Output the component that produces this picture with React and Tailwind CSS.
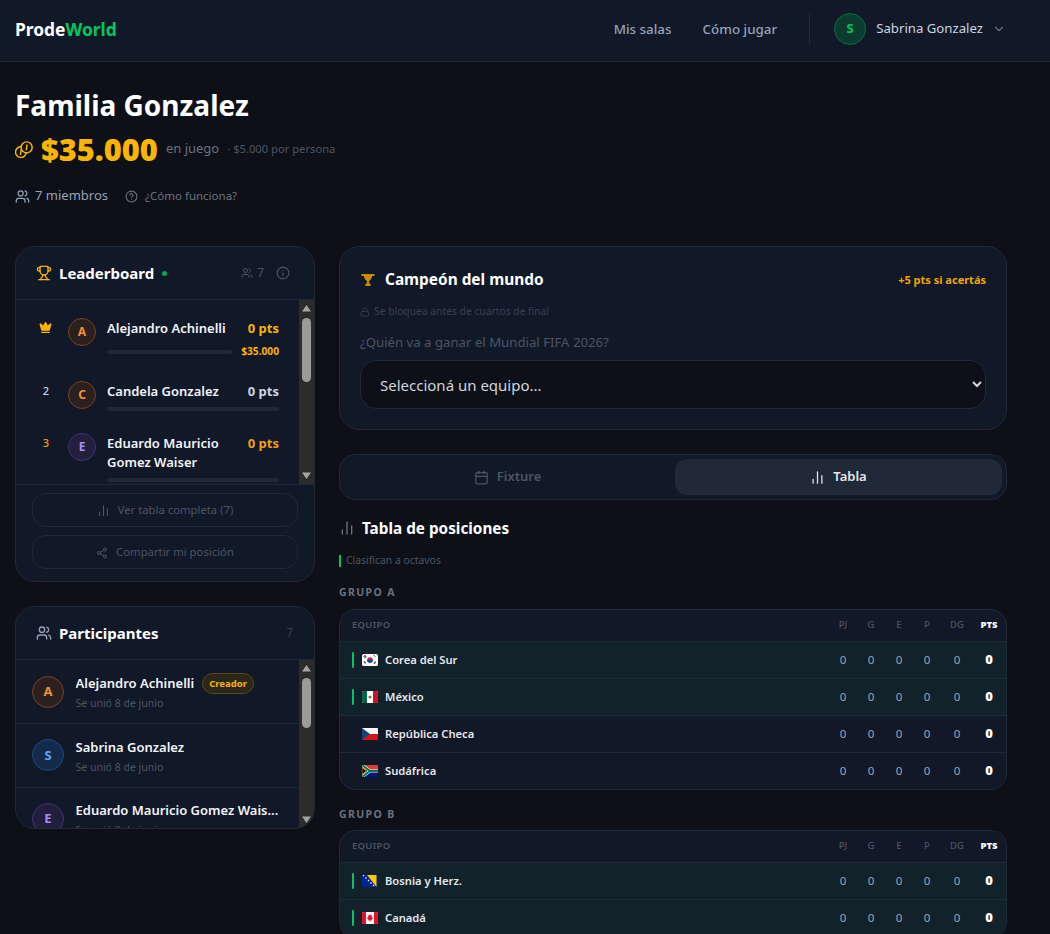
import React from "react";
import { Trophy, Users, Info, Crown, ChartNoAxesColumn, Share2, Lock, Calendar, CircleHelp, ChevronDown } from "lucide-react";

const font = "[font-family:'Noto_Sans','Open_Sans',sans-serif]";

function Scrollbar({ thumbTop, thumbH }) {
  return (
    <div className="relative w-[15px] shrink-0 bg-[#2c2c2c]">
      <svg className="absolute left-[3px] top-[5px]" width="9" height="7" viewBox="0 0 9 7"><path d="M4.5 0L9 6.5H0z" fill="#a3a3a3" /></svg>
      <div className="absolute left-[3px] w-[9px] rounded-full bg-[#9b9b9b]" style={{ top: thumbTop, height: thumbH }} />
      <svg className="absolute left-[3px] bottom-[5px]" width="9" height="7" viewBox="0 0 9 7"><path d="M4.5 7L0 .5h9z" fill="#a3a3a3" /></svg>
    </div>
  );
}

function Avatar({ letter, size, ring, bg, fg }) {
  return (
    <div className={`flex shrink-0 items-center justify-center rounded-full border font-bold ${size} ${ring} ${bg} ${fg}`}>{letter}</div>
  );
}

function LeaderRow({ rank, letter, ring, bg, fg, name, ptsColor, amount }) {
  return (
    <div className="flex py-[11px]">
      <div className={`flex h-[28px] w-[28px] shrink-0 justify-center pt-[2px] text-[11px] font-medium ${rank === "3" ? "text-[#f59e0b]" : "text-[#cbd5e1]"}`}>
        {rank === "crown" ? <Crown size={13} fill="#fbb500" stroke="#fbb500" className="mt-[1px] -translate-x-[1px]" /> : rank}
      </div>
      <Avatar letter={letter} size="ml-2 h-[28px] w-[28px] text-[12px]" ring={ring} bg={bg} fg={fg} />
      <div className="ml-[11px] min-w-0 flex-1 pt-[1px]">
        <div className="flex justify-between gap-3">
          <span className="text-[13px] font-semibold leading-[19px] text-[#f1f5f9]">{name}</span>
          <span className={`shrink-0 text-[13px] font-bold leading-[19px] ${ptsColor}`}>0 pts</span>
        </div>
        <div className="mt-[6px] flex items-center gap-2">
          <div className="h-[4px] flex-1 rounded-full bg-[#1f2937]" />
          {amount && <span className="text-[10.2px] font-bold leading-[15px] text-[#fbb500]">{amount}</span>}
        </div>
      </div>
    </div>
  );
}

function Participant({ letter, ring, bg, fg, name, badge }) {
  return (
    <div className="flex h-[63.5px] items-center gap-[11.5px] border-b border-[#1f2937] pl-4 pr-4">
      <Avatar letter={letter} size="h-8 w-8 text-[13px]" ring={ring} bg={bg} fg={fg} />
      <div className="min-w-0 flex-1 pt-[2px]">
        <div className="flex items-center gap-2">
          <span className="truncate text-[13px] font-semibold leading-[18px] text-[#f1f5f9]">{name}</span>
          {badge && <span className="-my-[2px] shrink-0 rounded-full border border-[#5c4a1c] bg-[#2a2718] px-[6px] py-[2px] text-[9.5px] font-bold leading-[15px] text-[#fbb500]">Creador</span>}
        </div>
        <div className="mt-[3px] text-[10.5px] leading-[16px] text-[#4b5563]">Se unió 8 de junio</div>
      </div>
    </div>
  );
}

const Korea = () => (
  <svg width="16" height="12" viewBox="0 0 16 12"><rect width="16" height="12" rx="1.5" fill="#fff" /><circle cx="8" cy="6" r="2.8" fill="#cd2e3a" /><path d="M5.2 6a2.8 2.8 0 0 0 5.6 0c-1-1-1.8 1-2.8 0S6 5 5.2 6z" fill="#0047a0" /><path d="M1.5 2.5l2-1.5M2 3.3l2-1.5M2.5 4l2-1.5M11.5 1l2 1.5M12 9.8l2-1.5M11.5 9l2-1.5M1.5 8l2 1.5M2 7.3l2 1.5" stroke="#000" strokeWidth=".7" /></svg>
);
const Mexico = () => (
  <svg width="16" height="12" viewBox="0 0 16 12"><rect width="16" height="12" rx="1.5" fill="#fff" /><path d="M0 1.5A1.5 1.5 0 0 1 1.5 0H5v12H1.5A1.5 1.5 0 0 1 0 10.5z" fill="#006847" /><path d="M11 0h3.500A1.500 1.500 0 0 1 16 1.500v9a1.500 1.500 0 0 1-1.500 1.500H11z" fill="#ce1126" /><circle cx="8" cy="6" r="1.500" fill="#8c6a3f" /></svg>
);
const Czech = () => (
  <svg width="16" height="12" viewBox="0 0 16 12"><rect width="16" height="6" fill="#fff" /><rect y="6" width="16" height="6" fill="#d7141a" /><path d="M0 0l8 6-8 6z" fill="#11457e" /></svg>
);
const SouthAfrica = () => (
  <svg width="16" height="12" viewBox="0 0 16 12"><rect width="16" height="6" fill="#e03c31" /><rect y="6" width="16" height="6" fill="#001489" /><path d="M0 0l8 6-8 6" fill="#000" /><path d="M0 0l8 6h8M0 12l8-6" stroke="#fff" strokeWidth="3" fill="none" /><path d="M0 0l8 6h8M0 12l8-6" stroke="#007749" strokeWidth="2" fill="none" /><path d="M0 2.500L4.500 6 0 9.500z" fill="#000" stroke="#ffb81c" strokeWidth=".8" /></svg>
);
const Bosnia = () => (
  <svg width="16" height="12" viewBox="0 0 16 12"><rect width="16" height="12" rx="1" fill="#002395" /><path d="M5 0h9.500v12z" fill="#fecb00" /><path d="M1 0l1 1M3.500 2.500l1 1M6 5l1 1M8.500 7.500l1 1M11 10l1 1" stroke="#fff" strokeWidth="1.200" /></svg>
);
const Canada = () => (
  <svg width="16" height="12" viewBox="0 0 16 12"><rect width="16" height="12" rx="1" fill="#fff" /><path d="M0 1a1 1 0 0 1 1-1h3v12H1a1 1 0 0 1-1-1zM12 0h3a1 1 0 0 1 1 1v10a1 1 0 0 1-1 1h-3z" fill="#e8112d" /><path d="M8 2l1 1.500 1-.3-.3 2 .9-.2-.3 1 .9.500L9.500 7.800l.2.8H8.300v1h-.6v-1H6.300l.2-.8L4.800 6.500l.9-.5-.3-1 .9.200-.3-2 1 .3z" fill="#e8112d" /></svg>
);

function TeamRow({ flag, name, q, last }) {
  return (
    <div className={`flex items-center ${q ? "bg-[#12222b]" : ""} ${last ? "h-[36px]" : "h-[37px] border-b border-[#1f2937]"}`}>
      <div className="flex flex-1 items-center pl-3">
        <div className={`h-[16px] w-[2px] rounded-full ${q ? "bg-[#00c85f]" : ""}`} />
        <div className="ml-2 flex w-4 shrink-0 overflow-hidden rounded-[1px]">{flag}</div>
        <span className="ml-[7px] text-[11.2px] font-semibold text-[#e5e7eb]">{name}</span>
      </div>
      {["w-7", "w-7", "w-7", "w-7", "w-8"].map((w, i) => (
        <div key={i} className={`${w} text-center text-[11.5px] text-[#9ca3af]`}>0</div>
      ))}
      <div className="mr-[1px] w-8 text-center text-[13px] font-black text-white">0</div>
    </div>
  );
}

function GroupTable({ title, children, mt, gap }) {
  return (
    <div className={mt}>
      <div className="text-[10.5px] font-bold leading-[16px] tracking-[0.13em] text-[#6b7280]">{title}</div>
      <div className={`${gap} overflow-hidden rounded-2xl border border-[#1f2937] bg-[#111827]`}>
        <div className="flex h-[32px] items-center border-b border-[#1f2937] pb-[1px]">
          <div className="flex-1 pl-3 text-[9.5px] font-semibold tracking-[0.03em] text-[#4b5563]">EQUIPO</div>
          {[["PJ", "w-7"], ["G", "w-7"], ["E", "w-7"], ["P", "w-7"], ["DG", "w-8"]].map(([h, w]) => (
            <div key={h} className={`${w} text-center text-[9.5px] font-medium text-[#4b5563]`}>{h}</div>
          ))}
          <div className="mr-[1px] w-8 text-center text-[9.5px] font-black text-white">PTS</div>
        </div>
        {children}
      </div>
    </div>
  );
}

export default function App() {
  return (
    <div className={`h-[934px] overflow-hidden bg-[#0d1017] text-white ${font}`}>
      <header className="flex h-[62px] items-center justify-between border-b border-[#1f2937] bg-[#111827] pb-[3px] pl-[15px] pr-[44px]">
        <div className="text-[17.4px] font-bold"><span className="text-white">Prode</span><span className="text-[#00c85f]">World</span></div>
        <div className="flex items-center">
          <span className="text-[13.4px] font-medium text-[#94a3b8]">Mis salas</span>
          <span className="ml-[31px] text-[13.4px] font-medium text-[#94a3b8]">Cómo jugar</span>
          <div className="ml-[32px] h-[32px] w-px bg-[#1f2937]" />
          <div className="ml-[24px] flex h-8 w-8 items-center justify-center rounded-full border border-[#0b6b45] bg-[#0c3b30] text-[13px] font-bold text-[#00c85f]">S</div>
          <span className="ml-[10px] text-[13.2px] text-[#cbd5e1]">Sabrina Gonzalez</span>
          <ChevronDown size={14} className="ml-[9px] text-[#64748b]" />
        </div>
      </header>

      <main className="w-[1007px] pl-[15px]">
        <h1 className="mt-[24px] text-[28px] font-bold leading-[38px] text-white">Familia Gonzalez</h1>
        <div className="mt-[6px] flex h-[38px] items-center">
          <svg width="18" height="17" viewBox="0 0 17 16" fill="none" stroke="#fbb500" strokeWidth="1.4" strokeLinecap="round">
            <circle cx="11" cy="6" r="5.200" />
            <path d="M5.810 5.500A5 5 0 1 0 10.450 11.180" />
            <path d="M11.300 3.800l-.6 4.400M5.800 8.300l-.6 4.400" />
          </svg>
          <span className="ml-2 text-[30.800px] font-black leading-none text-[#fbb500]">$35.000</span>
          <span className="ml-2 text-[13px] text-[#6b7280]">en juego</span>
          <span className="ml-2 text-[11.200px] text-[#4b5563]">· $5.000 por persona</span>
        </div>
        <div className="mt-[18px] flex h-[20px] items-center">
          <Users size={15} className="text-[#94a3b8]" />
          <span className="ml-[5px] text-[13px] text-[#94a3b8]">7 miembros</span>
          <CircleHelp size={13} className="ml-[17px] text-[#6b7280]" />
          <span className="ml-[7px] text-[11.500px] text-[#6b7280]">¿Cómo funciona?</span>
        </div>

        <div className="mt-[40px] flex items-start gap-6">
          <aside className="w-[300px] shrink-0">
            <section className="overflow-hidden rounded-[20px] border border-[#1f2937] bg-[#111827]">
              <div className="flex h-[53px] items-center border-b border-[#1f2937] pl-[20px] pr-[24px]">
                <Trophy size={16} className="text-[#fbb500]" />
                <span className="ml-[7px] text-[15px] font-bold text-white">Leaderboard</span>
                <span className="ml-2 h-[5px] w-[5px] rounded-full bg-[#00a85a]" />
                <Users size={12} className="ml-auto text-[#4b5563]" />
                <span className="ml-[4px] text-[12px] text-[#4b5563]">7</span>
                <Info size={14} className="ml-[12px] text-[#4b5563]" />
              </div>
              <div className="flex h-[184px]">
                <div className="min-w-0 flex-1 overflow-hidden pl-[16px] pr-5 pt-[7px]">
                  <LeaderRow rank="crown" letter="A" ring="border-[#7c3f1d]" bg="bg-[#2a211f]" fg="text-[#f28c38]" name="Alejandro Achinelli" ptsColor="text-[#fbb500]" amount="$35.000" />
                  <LeaderRow rank="2" letter="C" ring="border-[#7c3f1d]" bg="bg-[#2a211f]" fg="text-[#f28c38]" name="Candela Gonzalez" ptsColor="text-[#cbd5e1]" />
                  <LeaderRow rank="3" letter="E" ring="border-[#3f3473]" bg="bg-[#221f3d]" fg="text-[#a78bfa]" name="Eduardo Mauricio Gomez Waiser" ptsColor="text-[#f59e0b]" />
                </div>
                <Scrollbar thumbTop={18} thumbH={64} />
              </div>
              <div className="flex flex-col gap-[8px] border-t border-[#1f2937] px-4 pb-[12px] pt-[8px]">
                <div className="flex h-[34px] items-center justify-center gap-2 rounded-[14px] border border-[#1f2937] pt-[1px] text-[11.300px] text-[#4b5563]"><ChartNoAxesColumn size={13} />Ver tabla completa (7)</div>
                <div className="flex h-[34px] items-center justify-center gap-2 rounded-[14px] border border-[#1f2937] pt-[1px] text-[11.300px] text-[#4b5563]"><Share2 size={12} />Compartir mi posición</div>
              </div>
            </section>

            <section className="mt-[24px] overflow-hidden rounded-[20px] border border-[#1f2937] bg-[#111827]">
              <div className="flex h-[53px] items-center border-b border-[#1f2937] pl-[20px] pr-[21px]">
                <Users size={16} className="text-[#94a3b8]" />
                <span className="ml-[7px] text-[15px] font-bold text-white">Participantes</span>
                <span className="ml-auto text-[12px] text-[#374151]">7</span>
              </div>
              <div className="flex h-[168px]">
                <div className="min-w-0 flex-1 overflow-hidden pt-[0.5px]">
                  <Participant letter="A" ring="border-[#7c3f1d]" bg="bg-[#2a211f]" fg="text-[#f28c38]" name="Alejandro Achinelli" badge />
                  <Participant letter="S" ring="border-[#1e4a82]" bg="bg-[#132a4a]" fg="text-[#60a5fa]" name="Sabrina Gonzalez" />
                  <Participant letter="E" ring="border-[#3f3473]" bg="bg-[#221f3d]" fg="text-[#a78bfa]" name="Eduardo Mauricio Gomez Wais..." />
                </div>
                <Scrollbar thumbTop={18} thumbH={50} />
              </div>
            </section>
          </aside>

          <div className="min-w-0 flex-1">
            <section className="rounded-[20px] border border-[#1f2937] bg-[#111827] px-5 pb-[20px] pt-[22px]">
              <div className="flex h-[22px] items-center">
                <svg width="14" height="14" viewBox="0 0 14 14" className="ml-[1px]"><path d="M0.500 1h13v2h-2.400c-.3 2.500-1.600 4.500-3 5v2.500h1.500V13H4.400v-2.500h1.500V8c-1.400-.5-2.700-2.500-3-5H0.500z" fill="#c98a0a" /></svg>
                <span className="ml-[10px] text-[15.400px] font-bold text-white">Campeón del mundo</span>
                <span className="ml-auto text-[11px] font-bold text-[#f0a500]">+5 pts si acertás</span>
              </div>
              <div className="mt-[13px] flex h-[16px] items-center gap-[4px] text-[10.300px] text-[#374151]"><Lock size={10} />Se bloquea antes de cuartos de final</div>
              <div className="mt-[13px] text-[13.200px] leading-[18px] text-[#4b5563]">¿Quién va a ganar el Mundial FIFA 2026?</div>
              <select className="mt-[9px] h-[49px] w-full rounded-2xl border border-[#1f2937] bg-[#0d1017] pl-[15px] pr-2 text-[15px] text-[#d1d5db] [color-scheme:dark]" defaultValue="">
                <option value="">Seleccioná un equipo...</option>
              </select>
            </section>

            <div className="mt-[24px] flex h-[46px] gap-1 rounded-2xl border border-[#1f2937] bg-[#111827] p-[4px]">
              <div className="flex flex-1 items-center justify-center gap-2 text-[13px] font-semibold text-[#4b5563]"><Calendar size={15} />Fixture</div>
              <div className="flex flex-1 items-center justify-center gap-2 rounded-xl bg-[#1f2937] text-[13px] font-semibold text-[#e5e7eb]"><ChartNoAxesColumn size={15} />Tabla</div>
            </div>

            <div className="mt-[17px] flex h-[22px] items-center">
              <ChartNoAxesColumn size={16} className="text-[#6b7280]" />
              <span className="ml-[7px] text-[15.300px] font-bold text-white">Tabla de posiciones</span>
            </div>
            <div className="mt-[14px] flex h-[16px] items-center">
              <div className="h-[12px] w-[2px] bg-[#00c85f]" />
              <span className="ml-[5px] text-[10.400px] text-[#4b5563]">Clasifican a octavos</span>
            </div>

            <GroupTable title="GRUPO A" mt="mt-[15px]" gap="mt-[9px]">
              <TeamRow flag={<Korea />} name="Corea del Sur" q />
              <TeamRow flag={<Mexico />} name="México" q />
              <TeamRow flag={<Czech />} name="República Checa" />
              <TeamRow flag={<SouthAfrica />} name="Sudáfrica" last />
            </GroupTable>
            <GroupTable title="GRUPO B" mt="mt-[16px]" gap="mt-[8px]">
              <TeamRow flag={<Bosnia />} name="Bosnia y Herz." q />
              <TeamRow flag={<Canada />} name="Canadá" q />
            </GroupTable>
          </div>
        </div>
      </main>
    </div>
  );
}
